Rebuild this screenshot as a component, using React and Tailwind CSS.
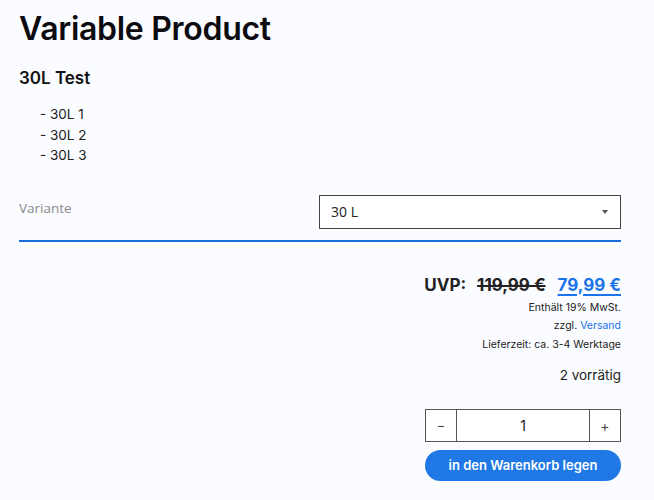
import React from "react";

export default function App() {
  return (
    <div className="min-h-[500px] w-[654px] bg-[#fafcff] text-[#111] overflow-hidden" style={{ fontFamily: "Inter, 'Noto Sans', sans-serif" }}>
      <div className="pl-[19px] pr-[33px] pt-[7px]">
        <h1 className="text-[32px] font-semibold leading-[44px] tracking-[-0.3px] text-[#0b0b10]">Variable Product</h1>
        <h2 className="mt-[15px] text-[17px] font-semibold leading-[24px]">30L Test</h2>
        <ul className="mt-[14px] pl-[21px] text-[13.5px] leading-[20.5px] text-[#222]">
          <li>- 30L 1</li>
          <li>- 30L 2</li>
          <li>- 30L 3</li>
        </ul>

        <div className="mt-[29px] flex items-start border-b-2 border-[#1a6fdc] pb-[11px]">
          <div className="flex-1 pt-[3px] text-[13.5px] text-[#8a8a8a]" style={{ fontFamily: "'Open Sans', sans-serif" }}>Variante</div>
          <div className="flex h-[34px] w-[302px] items-center justify-between border border-[#444] bg-white pl-[11px] pr-[12px]">
            <span className="text-[14px] text-[#222]" style={{ fontFamily: "'Open Sans', sans-serif" }}>30 L</span>
            <span className="h-0 w-0 border-x-[3.5px] border-t-[4px] border-x-transparent border-t-[#555]"></span>
          </div>
        </div>

        <div className="mt-[31px] flex flex-col items-end">
          <div className="flex items-baseline text-[17px] font-bold leading-[24px]">
            <span className="text-[#222]">UVP:</span>
            <span className="ml-[11px] text-[#222] line-through decoration-[2px]">119,99 €</span>
            <span className="ml-[12px] text-[#1a73e8] underline decoration-[2px] underline-offset-[3px]">79,99 €</span>
          </div>
          <div className="mt-[2px] text-[10.5px] leading-[18.5px] text-[#222]">Enthält 19% MwSt.</div>
          <div className="text-[10.5px] leading-[18.5px] text-[#222]">zzgl. <span className="text-[#1a73e8]">Versand</span></div>
          <div className="text-[10.5px] leading-[18.5px] text-[#222]">Lieferzeit: ca. 3-4 Werktage</div>
          <div className="mt-[11px] text-[13.5px] leading-[20px] text-[#222]">2 vorrätig</div>

          <div className="mt-[24px] flex h-[33px] w-[196px] border border-[#555] bg-white">
            <div className="flex w-[31px] items-center justify-center border-r border-[#555] text-[13px] text-[#444]">−</div>
            <div className="flex flex-1 items-center justify-center text-[14px] text-[#1a1a1a]">1</div>
            <div className="flex w-[31px] items-center justify-center border-l border-[#555] text-[14px] text-[#444]">+</div>
          </div>
          <button className="mt-[8px] h-[31px] w-[196px] rounded-full bg-[#1f78e6] text-[13px] font-semibold text-white">in den Warenkorb legen</button>
        </div>
      </div>
    </div>
  );
}
